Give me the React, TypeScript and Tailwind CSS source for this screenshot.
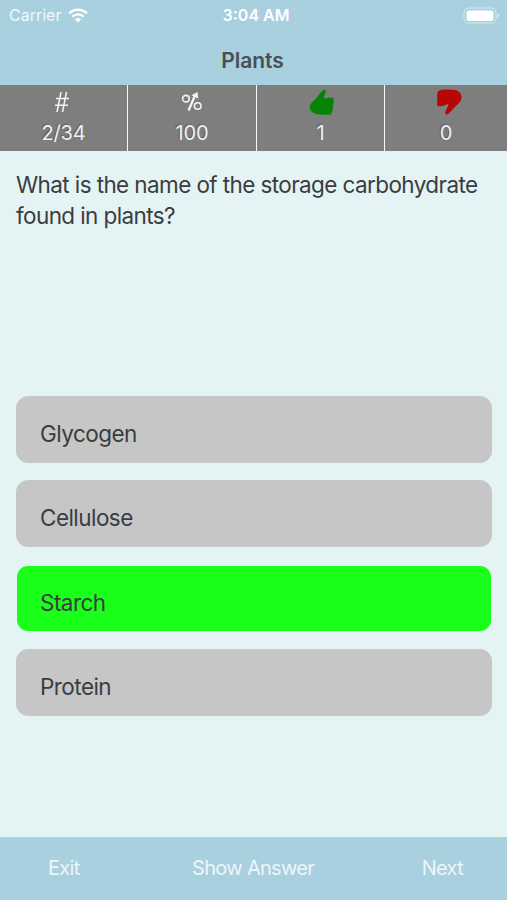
import clsx from "clsx";
import type { ReactNode } from "react";

const options = ["Glycogen", "Cellulose", "Starch", "Protein"];
const correct = "Starch";

function StatusBar() {
  return (
    <div className="flex h-[30px] items-center text-white">
      <div className="flex flex-1 items-center gap-[7px] pl-[9px]">
        <span className="text-[16px] leading-none text-white/85">Carrier</span>
        <svg width="20" height="15" viewBox="0 0 20 15" fill="none">
          <path d="M1.2 5.3a12.6 12.6 0 0 1 17.6 0" stroke="#fff" strokeWidth="2.5" />
          <path d="M4.4 8.7a8 8 0 0 1 11.2 0" stroke="#fff" strokeWidth="2.4" />
          <path d="M10 14.5 6.9 11.4a4.4 4.4 0 0 1 6.2 0z" fill="#fff" />
        </svg>
      </div>
      <span className="pl-[3px] text-[16px] leading-none font-semibold">3:04 AM</span>
      <div className="flex flex-1 justify-end pr-[7px]">
        <svg width="37" height="17" viewBox="0 0 37 17" fill="none">
          <rect x="1" y="1" width="32" height="15" rx="4.5" stroke="#fff" strokeOpacity="0.5" />
          <rect x="3.5" y="3.5" width="27" height="10.5" rx="2" fill="#fff" />
          <path d="M34.5 6v5c1.1-.5 1.7-1.4 1.7-2.5S35.6 6.5 34.5 6z" fill="#fff" fillOpacity="0.6" />
        </svg>
      </div>
    </div>
  );
}

function HashIcon() {
  return (
    <svg
      className="mr-[3px]"
      width="16"
      height="22"
      viewBox="0 0 16 22"
      fill="none"
      stroke="#f4f4f4"
      strokeWidth="1.5"
    >
      <path d="M7 1 3 21M12.5 1 8.5 21M2 7.5h13M1 14.3h13" />
    </svg>
  );
}

function PercentIcon() {
  return (
    <svg
      className="mr-px"
      width="22"
      height="20"
      viewBox="0 0 22 20"
      fill="none"
      stroke="#f4f4f4"
      strokeWidth="1.6"
    >
      <circle cx="4.9" cy="6.7" r="3.3" />
      <circle cx="16.7" cy="14" r="3.3" />
      <path d="M7.5 18.5 13.8 4" strokeWidth="2.3" />
      <path d="m16.5 0 .7 6.600-6.800-3.300z" fill="#f4f4f4" stroke="none" />
    </svg>
  );
}

function ThumbUpIcon() {
  return (
    <svg className="ml-0.5" width="26" height="26" viewBox="0 0 26 26" fill="#068406">
      <path d="M13.5 1.5c1.3-1.3 3.4-.7 3.4.9 0 1.600-1.900 4-1.900 6.600 0 1 1.500.9 2.600.3 1.800-1 4.700-.9 6.500-.2 1.100.5.500 2.200.600 3.700.1 1.500-.8 2.400-.6 3.800.2 2.500-.4 4.700-1 6.200-.5 1.300-.9 2.600-2 2.700-2.900.5-9.600.5-14.300-.7-3.500-.7-5.800-3-6-6-.2-2.600 1.300-5.300 4.200-7.300C8.500 9 10.100 4.500 13.500 1.500z" />
    </svg>
  );
}

function ThumbDownIcon() {
  return (
    <svg className="ml-[5px]" width="26" height="26" viewBox="0 0 26 26" fill="#b60606">
      <path d="M2.5 2C6 .3 14 .2 19 1.100c4 .7 6.500 3.400 6.500 7 0 4.300-3.300 6.600-6.300 9.700-2.900 2.900-5 5.300-7.100 7.200-1.200 1.100-2.800.6-2.800-1 0-2.400 2.500-5.500 3.100-8.200.2-1.100-1.100-.8-2.300 0-2 1.200-5.500 1.900-8.200 1.200-1.200-.3-.7-1.800-.8-3.300-.1-1.400.6-2.500.3-4-.5-2.900-.4-6.300 1.100-7.700z" />
    </svg>
  );
}

function Stat({ icon, value }: { icon: ReactNode; value: string }) {
  return (
    <div className="flex flex-col items-center bg-[#7e7e7e]">
      <div className="flex h-[34px] items-center">{icon}</div>
      <span className="text-[20px] leading-[29px] tracking-[-0.2px] text-[#f0f0f0] [text-shadow:-1px_-1px_1px_#606060]">
        {value}
      </span>
    </div>
  );
}

export default function App() {
  return (
    <div className="flex h-[900px] w-[507px] flex-col bg-[#e4f3f4] font-[Inter,sans-serif] text-[#3a3d3f]">
      <header className="h-[85px] bg-[#a8d0de]">
        <StatusBar />
        <h1 className="pr-0.5 pt-4 text-center text-[21px] leading-[30px] font-semibold text-[#4b4f52]">
          Plants
        </h1>
      </header>

      <section className="grid h-[66px] grid-cols-[127px_128px_127px_1fr] gap-x-px bg-[#f4f8f8]">
        <Stat icon={<HashIcon />} value="2/34" />
        <Stat icon={<PercentIcon />} value="100" />
        <Stat icon={<ThumbUpIcon />} value="1" />
        <Stat icon={<ThumbDownIcon />} value="0" />
      </section>

      <main className="flex flex-1 flex-col pr-[15px] pl-4">
        <p className="h-[245px] pt-[18px] text-[22.5px] leading-[31px] tracking-[-0.6px] whitespace-nowrap">
          What is the name of the storage carbohydrate
          <br />
          found in plants?
        </p>
        <div className="flex flex-col gap-[17.3px]">
          {options.map((option) => (
            <button
              key={option}
              className={clsx(
                "h-[67px] w-full rounded-xl border pt-[9px] pl-[23px] text-left text-[22.5px] tracking-[-0.55px]",
                option === correct
                  ? "border-transparent bg-[#1aff1a] bg-clip-padding"
                  : "border-[#c6c6c6] bg-[#c6c6c6]"
              )}
            >
              {option}
            </button>
          ))}
        </div>
      </main>

      <footer className="flex h-[63px] items-center justify-between bg-[#a8d0de] pr-11 pb-0.5 pl-12 text-[20px] tracking-[-0.7px] text-[#eef5fa] [text-shadow:-1px_-1px_1px_#7893a0]">
        <button>Exit</button>
        <button className="pl-[5px]">Show Answer</button>
        <button>Next</button>
      </footer>
    </div>
  );
}
